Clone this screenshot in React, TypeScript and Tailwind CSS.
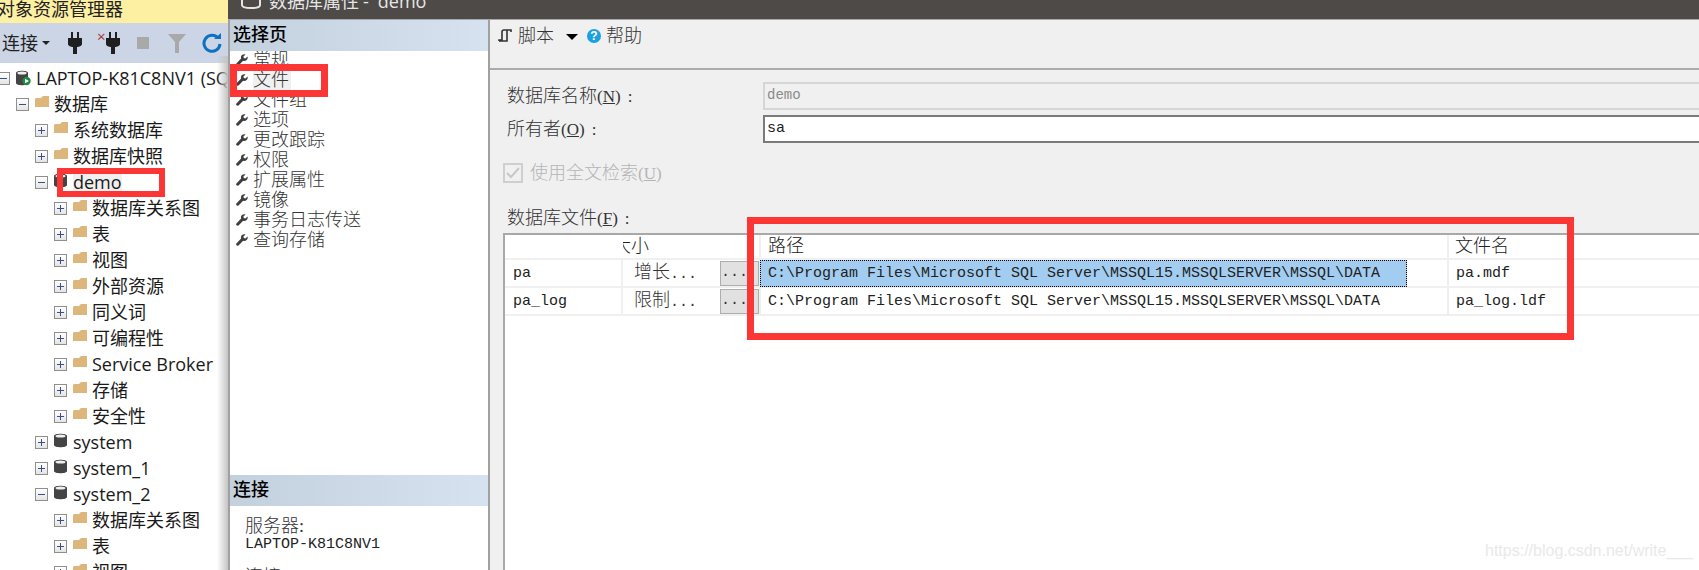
import React from "react";

const SANS = "font-['Open_Sans','Noto_Sans_CJK_SC',sans-serif]";
const SERIF = "font-['Liberation_Serif','Noto_Sans_CJK_SC',serif]";
const MONO = "font-['Liberation_Mono','Noto_Sans_CJK_SC',monospace]";

function Expander({ open }: { open?: boolean }) {
  return (
    <span className="relative block w-[13px] h-[13px] shrink-0 border border-[#8f8f8f] bg-gradient-to-b from-white to-[#e4e4e4]">
      <span className="absolute left-[2px] right-[2px] top-[5px] h-px bg-[#3c4f85]" />
      {!open && <span className="absolute top-[2px] bottom-[2px] left-[5px] w-px bg-[#3c4f85]" />}
    </span>
  );
}

function Folder() {
  return (
    <svg width="15" height="13" viewBox="0 0 15 13" className="shrink-0 -mt-[3px]">
      <path d="M0 3 L1 2 L6 2 L8 0 L14 0 L14 11 L0 11 Z" fill="#dcb67a" />
    </svg>
  );
}

function Db() {
  return (
    <svg width="13" height="15" viewBox="0 0 13 15" className="shrink-0 -mt-[3px]">
      <path d="M0 3 C0 0 13 0 13 3 L13 12 C13 15 0 15 0 12 Z" fill="#444" />
      <ellipse cx="6.5" cy="3" rx="5" ry="1.6" fill="#eee" />
    </svg>
  );
}

function Server() {
  return (
    <svg width="15" height="16" viewBox="0 0 15 16" className="shrink-0">
      <path d="M0 3 C0 0 12 0 12 3 L12 13 C12 16 0 16 0 13 Z" fill="#444" />
      <ellipse cx="6" cy="3" rx="4.6" ry="1.5" fill="#eee" />
      <circle cx="10.5" cy="11" r="4.2" fill="#1e8a44" />
      <path d="M9 8.8 L13 11 L9 13.2 Z" fill="#fff" />
    </svg>
  );
}

function Row({ level, open, kind, label, hl }: { level: number; open?: boolean; kind: string; label: string; hl?: boolean }) {
  const pad = ["-ml-[3px]", "pl-[16px]", "pl-[35px]", "pl-[54px]"][level];
  const gap = kind === "server" ? "ml-[5px]" : kind === "db" ? "ml-[6px]" : "ml-[4px]";
  return (
    <div className={`h-[26px] flex items-center shrink-0 ${pad}`}>
      <Expander open={open} />
      <span className="w-[6px] shrink-0" />
      {kind === "folder" ? <Folder /> : kind === "db" ? <Db /> : <Server />}
      <span className={`${gap} whitespace-nowrap text-[18px] leading-[26px] text-[#1a1a1a] ${hl ? "bg-[#f0f0f0]" : ""}`}>{label}</span>
    </div>
  );
}

const Plug = () => (
  <svg width="14" height="22" viewBox="0 0 14 22">
    <path d="M3 0 H5 V6 H9 V0 H11 V6 H14 V12 C14 14 11 15 9 15 V22 H5 V15 C3 15 0 14 0 12 V6 H3 Z" fill="#1f1f1f" />
  </svg>
);

const Wrench = () => (
  <svg width="12" height="12" viewBox="0 0 12 12" className="shrink-0">
    <path d="M11.6 2.4 L9.4 4.4 L7.8 4 L7.4 2.4 L9.5 0.4 C7.6 -0.4 5 0.8 4.9 3.1 C4.9 3.7 5 4.2 5.1 4.6 L0.4 9.4 C-0.2 10 0 10.8 0.5 11.3 C1.1 11.9 1.9 12 2.5 11.4 L7.2 6.8 C9.6 7.6 12.4 5.4 11.6 2.4 Z" fill="#3f3f3f" />
  </svg>
);

const tree: { level: number; open?: boolean; kind: string; label: string; hl?: boolean }[] = [
  { level: 0, open: true, kind: "server", label: "LAPTOP-K81C8NV1 (SQL Server)" },
  { level: 1, open: true, kind: "folder", label: "数据库" },
  { level: 2, kind: "folder", label: "系统数据库" },
  { level: 2, kind: "folder", label: "数据库快照" },
  { level: 2, open: true, kind: "db", label: "demo", hl: true },
  { level: 3, kind: "folder", label: "数据库关系图" },
  { level: 3, kind: "folder", label: "表" },
  { level: 3, kind: "folder", label: "视图" },
  { level: 3, kind: "folder", label: "外部资源" },
  { level: 3, kind: "folder", label: "同义词" },
  { level: 3, kind: "folder", label: "可编程性" },
  { level: 3, kind: "folder", label: "Service Broker" },
  { level: 3, kind: "folder", label: "存储" },
  { level: 3, kind: "folder", label: "安全性" },
  { level: 2, kind: "db", label: "system" },
  { level: 2, kind: "db", label: "system_1" },
  { level: 2, open: true, kind: "db", label: "system_2" },
  { level: 3, kind: "folder", label: "数据库关系图" },
  { level: 3, kind: "folder", label: "表" },
  { level: 3, kind: "folder", label: "视图" },
];

const pages = ["常规", "文件", "文件组", "选项", "更改跟踪", "权限", "扩展属性", "镜像", "事务日志传送", "查询存储"];
const PATH = "C:\\Program Files\\Microsoft SQL Server\\MSSQL15.MSSQLSERVER\\MSSQL\\DATA";

function Header({ children }: { children: React.ReactNode }) {
  return (
    <div className={`relative z-10 h-[31px] shrink-0 flex items-center pl-[3px] bg-gradient-to-r from-[#c3d0dd] to-[#d6e2ef] text-[18px] text-black font-medium ${SERIF}`}>
      {children}
    </div>
  );
}

function FileRow({ name, grow, dots, sel }: { name: string; grow: string; dots: string; sel?: boolean }) {
  return (
    <>
      <div className={`h-[28px] border-b-2 border-r-2 border-[#f0f0f0] pl-[8px] text-[15px] leading-[27px] text-[#222] ${MONO}`}>{name}</div>
      <div className={`h-[28px] border-b-2 border-r-2 border-[#f0f0f0] pl-[11px] flex text-[15px] leading-[27px] text-[#333] ${MONO}`}>
        <span className="w-[86px] shrink-0 whitespace-nowrap"><span className="text-[18px] font-light">{grow}</span>{dots}</span>
        <span className="w-[39px] h-[25px] shrink-0 mt-[1px] bg-[#e1e1e1] border border-[#adadad] leading-[22px] pl-0">...</span>
      </div>
      <div className={`h-[28px] border-b-2 border-r-2 border-[#f0f0f0] text-[15px] leading-[26px] text-[#222] ${MONO}`}>
        <div className={`w-[647px] h-[27px] pl-[7px] -ml-px border border-transparent ${sel ? "bg-[#a3cdf0] border-dotted !border-black" : ""}`}>{PATH}</div>
      </div>
      <div className={`h-[28px] border-b-2 border-[#f0f0f0] pl-[7px] text-[15px] leading-[27px] text-[#222] ${MONO}`}>{name === "pa" ? "pa.mdf" : "pa_log.ldf"}</div>
    </>
  );
}

export default function App() {
  return (
    <div className="relative flex w-[1699px] h-[570px] overflow-hidden bg-white">
      {/* Object explorer */}
      <div className={`relative w-[228px] shrink-0 flex flex-col overflow-hidden ${SANS}`}>
        <div className={`h-[23px] shrink-0 bg-[#fdf0a3] overflow-hidden -indent-[3px] whitespace-nowrap text-[18px] leading-[18px] text-[#222] ${SANS}`}>对象资源管理器</div>
        <div className="h-[40px] shrink-0 bg-[#ccd5e5] flex items-center pl-[2px]">
          <span className="text-[18px] text-[#222] w-[37px] mt-[1px]">连接</span>
          <span className="w-0 h-0 ml-[3px] border-x-[4px] border-x-transparent border-t-[4px] border-t-[#222]" />
          <span className="ml-[18px]"><Plug /></span>
          <span className="ml-[15px] relative flex">
            <span className="text-[#a83232] text-[15px] leading-[15px] -mt-[3px] w-[9px]">×</span>
            <Plug />
          </span>
          <span className="ml-[17px] w-[12px] h-[12px] bg-[#a9a9a9]" />
          <svg width="18" height="20" viewBox="0 0 18 20" className="ml-[19px]"><path d="M0 1 H18 L11 9 V20 H7 V9 Z" fill="#a9a9a9" /></svg>
          <svg width="20" height="20" viewBox="0 0 20 20" className="ml-[16px]" fill="none"><path d="M16 5 A8 8 0 1 0 18 11" stroke="#0e70c0" strokeWidth="3" /><path d="M12 6 H19 V0 Z" fill="#0e70c0" /></svg>
        </div>
        <div className="flex-1 flex flex-col pt-[2px] overflow-hidden">
          {tree.map((r, i) => <Row key={i} {...r} />)}
        </div>
        <div className="absolute right-0 top-[56px] bottom-0 w-[11px] bg-gradient-to-r from-white/0 to-[#c4c4c4]" />
      </div>

      {/* Dialog */}
      <div className="flex-1 min-w-0 flex flex-col">
        <div className="h-[20px] shrink-0 bg-[#4d4a48] border-b border-[#a8a8a8] flex items-center pl-[13px] overflow-hidden">
          <svg width="20" height="14" viewBox="0 0 20 14" fill="none" className="-mt-[14px] shrink-0"><path d="M1 0 V9 C1 13 19 13 19 9 V0" stroke="#e6e6e6" strokeWidth="2" /></svg>
          <span className={`ml-[8px] -mt-[17px] text-[18px] leading-[18px] text-[#e6e6e6] whitespace-nowrap ${SERIF}`}>数据库属性<span className={`ml-[4px] ${SANS}`}>-</span><span className={`ml-[9px] ${SANS}`}>demo</span></span>
        </div>
        <div className="flex-1 min-h-0 flex">
          {/* Nav */}
          <div className="w-[262px] shrink-0 flex flex-col bg-white border-l-2 border-r-2 border-[#a0a0a0] overflow-hidden">
            <Header>选择页</Header>
            <div className="flex-1 flex flex-col -mt-[1px]">
              {pages.map((p) => (
                <div key={p} className="h-[20px] flex items-center pl-[6px] shrink-0">
                  <Wrench />
                  <span className={`ml-[5px] text-[18px] leading-[20px] font-light text-[#333] ${SERIF} ${p === "文件" ? "bg-[#f0f0f0] pr-[2px]" : ""}`}>{p}</span>
                </div>
              ))}
            </div>
            <Header>连接</Header>
            <div className="shrink-0 h-[64px] pt-[11px] pl-[15px] overflow-hidden">
              <div className={`text-[18px] leading-[18px] font-light text-[#333] ${SERIF}`}>服务器:</div>
              <div className={`text-[15px] leading-[19px] text-[#222] ${MONO}`}>LAPTOP-K81C8NV1</div>
              <div className={`mt-[14px] text-[18px] leading-[18px] font-light text-[#333] ${SERIF}`}>连接:</div>
            </div>
          </div>

          {/* Main */}
          <div className={`flex-1 min-w-0 flex flex-col bg-[#f0f0f0] font-light overflow-hidden ${SERIF}`}>
            <div className="h-[50px] shrink-0 border-b-2 border-[#ababab] flex items-start pt-[6px] pl-[8px] text-[18px] leading-[20px] text-[#333]">
              <svg width="14" height="14" viewBox="0 0 14 14" fill="none" stroke="#333" strokeWidth="1.6" className="mt-[3px] shrink-0"><path d="M1 12 H9 V2 C9 1 10 1 10 1 H13 V3 M1 12 V11 H4 V3 C4 1 5 1 6 1 H10" /></svg>
              <span className="ml-[6px]">脚本</span>
              <span className="ml-[12px] mt-[8px] w-0 h-0 border-x-[6px] border-x-transparent border-t-[6px] border-t-black" />
              <span className="ml-[9px] mt-[3px] w-[14px] h-[14px] rounded-full bg-[#1ba1e2] text-white text-[12px] leading-[14px] font-bold text-center font-['Liberation_Sans',sans-serif]">?</span>
              <span className="ml-[5px]">帮助</span>
            </div>

            <div className="flex-1 min-h-0 flex flex-col pt-[12px]">
              <div className="flex h-[28px] items-center">
                <span className="w-[273px] shrink-0 pl-[17px] text-[18px] text-[#333]">数据库名称<span className="text-[17px] font-normal">(<u>N</u>)<span className="ml-[7px]">:</span></span></span>
                <div className={`flex-1 h-[28px] -mr-[6px] border-2 border-[#d6d6d6] pl-[2px] text-[14px] leading-[22px] text-[#8a8a8a] ${MONO}`}>demo</div>
              </div>
              <div className="flex h-[28px] items-center mt-[5px]">
                <span className="w-[273px] shrink-0 pl-[17px] text-[18px] text-[#333]">所有者<span className="text-[17px] font-normal">(<u>O</u>)<span className="ml-[7px]">:</span></span></span>
                <div className={`flex-1 h-[28px] -mr-[6px] border-2 border-[#7a7a7a] bg-white pl-[2px] text-[15px] leading-[24px] text-[#222] ${MONO}`}>sa</div>
              </div>
              <div className="flex items-center h-[20px] mt-[20px] pl-[13px]">
                <span className="w-[20px] h-[20px] border-2 border-[#cfcfcf] flex items-center justify-center shrink-0">
                  <svg width="14" height="12" viewBox="0 0 14 12" fill="none" stroke="#c8c8c8" strokeWidth="2"><path d="M1 6 L5 10 L13 1" /></svg>
                </span>
                <span className="ml-[7px] text-[18px] text-[#b5b5b5]">使用全文检索<span className="text-[17px] font-normal">(<u>U</u>)</span></span>
              </div>
              <div className="mt-[25px] h-[20px] pl-[17px] text-[18px] leading-[20px] text-[#333]">数据库文件<span className="text-[17px] font-normal">(<u>F</u>)<span className="ml-[7px]">:</span></span></div>
              <div className="ml-[13px] mt-[5px] flex-1 bg-white border-t-2 border-l-2 border-[#a8a8a8] overflow-hidden">
                <div className="grid grid-cols-[118px_138px_688px_1fr]">
                  <div className="h-[25px] border-b-2 border-[#f0f0f0]" />
                  <div className="h-[25px] border-b-2 border-r-2 border-[#f0f0f0] overflow-hidden whitespace-nowrap text-[18px] leading-[22px] text-[#222] -indent-[10px]">大小</div>
                  <div className="h-[25px] border-b-2 border-r-2 border-[#f0f0f0] pl-[7px] text-[18px] leading-[22px] text-[#222]">路径</div>
                  <div className="h-[25px] border-b-2 border-[#f0f0f0] pl-[6px] text-[18px] leading-[22px] text-[#222]">文件名</div>
                  <FileRow name="pa" grow="增长" dots="..." sel />
                  <FileRow name="pa_log" grow="限制" dots="..." />
                </div>
              </div>
            </div>
          </div>
        </div>
      </div>

      {/* Red annotations and watermark over the screenshot */}
      <div className="absolute left-[57px] top-[168px] w-[108px] h-[29px] border-[6px] border-[#fc3535]" />
      <div className="absolute left-[230px] top-[64px] w-[98px] h-[33px] border-[7px] border-[#fc3535]" />
      <div className="absolute left-[747px] top-[217px] w-[827px] h-[123px] border-[7px] border-[#fc3535]" />
      <div className="absolute left-[1485px] top-[541px] text-[16px] leading-[20px] text-[#e9e9e9] font-['Liberation_Sans',sans-serif]">https://blog.csdn.net/write___</div>
    </div>
  );
}
